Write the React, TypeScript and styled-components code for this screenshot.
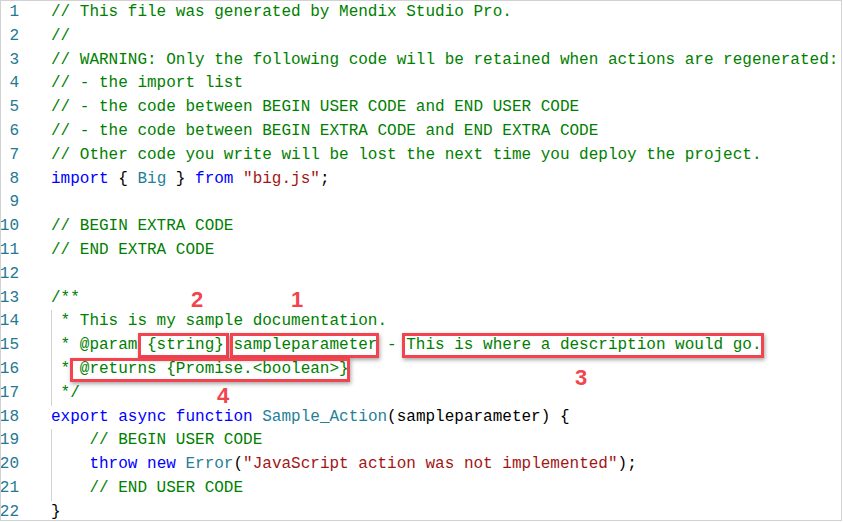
import React from "react"
import styled, { createGlobalStyle } from "styled-components"

const GlobalStyle = createGlobalStyle`
  html, body {
    margin: 0;
    padding: 0;
    background: #ffffff;
  }
`

const StyledEditor = styled.div`
  position: relative;
  box-sizing: border-box;
  width: 842px;
  height: 521px;
  border: 1px solid #d2d2d2;
  background: #ffffff;
  overflow: hidden;
  font-family: "Liberation Mono", "DejaVu Sans Mono", monospace;
  font-size: 16px;
  line-height: 23.8px;
`

const StyledLine = styled.div`
  display: flex;
  height: 23.8px;
`

const StyledLineNumber = styled.div`
  flex: none;
  width: 18px;
  display: flex;
  justify-content: flex-end;
  color: #237893;
  white-space: nowrap;
`

const StyledCode = styled.div<{ $guide?: boolean }>`
  position: relative;
  margin-left: 32px;
  white-space: pre;
  color: #000000;

  &::before {
    content: "";
    display: ${({ $guide }) => ($guide ? "block" : "none")};
    position: absolute;
    left: 0;
    top: 0;
    bottom: 0;
    width: 1px;
    background: #d3d3d3;
  }
`

const Comment = styled.span`
  color: #008000;
`

const Keyword = styled.span`
  color: #0000ff;
`

const TypeName = styled.span`
  color: #267f99;
`

const Str = styled.span`
  color: #a31515;
`

const StyledMarkBox = styled.div<{ $x: number; $y: number; $w: number; $h: number }>`
  position: absolute;
  left: ${({ $x }) => $x}px;
  top: ${({ $y }) => $y}px;
  width: ${({ $w }) => $w}px;
  height: ${({ $h }) => $h}px;
  box-sizing: border-box;
  border: 3px solid #f2434f;
  box-shadow: 1px 2px 4px rgba(0, 0, 0, 0.35);
`

const StyledMarkNumber = styled.div<{ $x: number; $y: number }>`
  position: absolute;
  left: ${({ $x }) => $x}px;
  top: ${({ $y }) => $y}px;
  font-family: "Liberation Sans", Arial, sans-serif;
  font-weight: 700;
  font-size: 22px;
  line-height: 22px;
  color: #f2434f;
`

interface ILine {
  guide?: boolean
  content: React.ReactNode
}

const lines: ILine[] = [
  { content: <Comment>// This file was generated by Mendix Studio Pro.</Comment> },
  { content: <Comment>//</Comment> },
  {
    content: (
      <Comment>
        // WARNING: Only the following code will be retained when actions are regenerated:
      </Comment>
    ),
  },
  { content: <Comment>// - the import list</Comment> },
  { content: <Comment>// - the code between BEGIN USER CODE and END USER CODE</Comment> },
  { content: <Comment>// - the code between BEGIN EXTRA CODE and END EXTRA CODE</Comment> },
  {
    content: (
      <Comment>// Other code you write will be lost the next time you deploy the project.</Comment>
    ),
  },
  {
    content: (
      <>
        <Keyword>import</Keyword> {"{ "}
        <TypeName>Big</TypeName>
        {" } "}
        <Keyword>from</Keyword> <Str>"big.js"</Str>;
      </>
    ),
  },
  { content: "" },
  { content: <Comment>// BEGIN EXTRA CODE</Comment> },
  { content: <Comment>// END EXTRA CODE</Comment> },
  { content: "" },
  { content: <Comment>/**</Comment> },
  { guide: true, content: <Comment> * This is my sample documentation.</Comment> },
  {
    guide: true,
    content: (
      <Comment> * @param {"{string}"} sampleparameter - This is where a description would go.</Comment>
    ),
  },
  { guide: true, content: <Comment> * @returns {"{Promise.<boolean>}"}</Comment> },
  { guide: true, content: <Comment> */</Comment> },
  {
    content: (
      <>
        <Keyword>export</Keyword> <Keyword>async</Keyword> <Keyword>function</Keyword>{" "}
        <TypeName>Sample_Action</TypeName>(sampleparameter) {"{"}
      </>
    ),
  },
  { guide: true, content: <Comment>    // BEGIN USER CODE</Comment> },
  {
    guide: true,
    content: (
      <>
        {"    "}
        <Keyword>throw</Keyword> <Keyword>new</Keyword> <TypeName>Error</TypeName>(
        <Str>"JavaScript action was not implemented"</Str>);
      </>
    ),
  },
  { guide: true, content: <Comment>    // END USER CODE</Comment> },
  { content: "}" },
]

// annotation boxes drawn over the code
const marks = [
  { x: 137, y: 332, w: 91, h: 25 },
  { x: 229, y: 332, w: 149, h: 25 },
  { x: 401, y: 332, w: 362, h: 25 },
  { x: 69, y: 357, w: 280, h: 24 },
]

const numbers = [
  { label: "1", x: 290, y: 288 },
  { label: "2", x: 190, y: 288 },
  { label: "3", x: 574, y: 366 },
  { label: "4", x: 216, y: 384 },
]

const App: React.FC = () => {
  return (
    <>
      <GlobalStyle />
      <StyledEditor>
        {lines.map((line, i) => (
          <StyledLine key={i}>
            <StyledLineNumber>{i + 1}</StyledLineNumber>
            <StyledCode $guide={line.guide}>{line.content}</StyledCode>
          </StyledLine>
        ))}
        {marks.map((m, i) => (
          <StyledMarkBox key={i} $x={m.x} $y={m.y} $w={m.w} $h={m.h} />
        ))}
        {numbers.map((n) => (
          <StyledMarkNumber key={n.label} $x={n.x} $y={n.y}>
            {n.label}
          </StyledMarkNumber>
        ))}
      </StyledEditor>
    </>
  )
}

export default App
